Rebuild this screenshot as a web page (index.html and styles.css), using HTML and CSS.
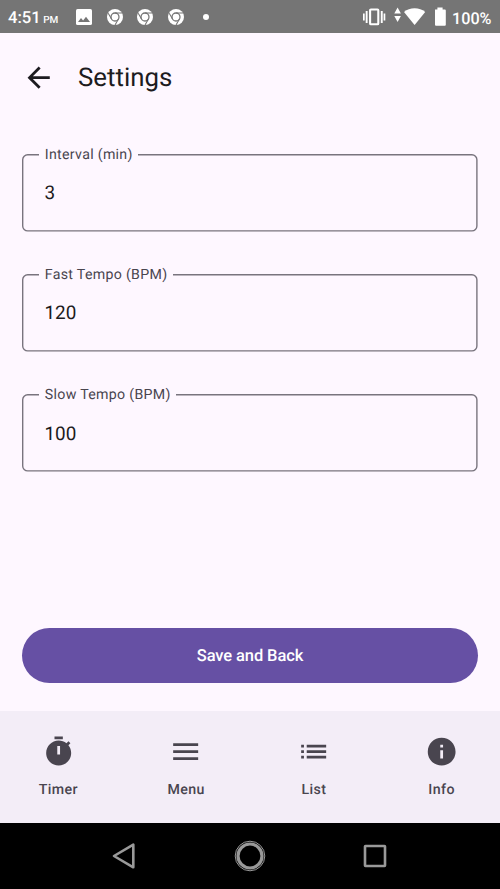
FILE: index.html
```html
<!DOCTYPE html>
<html lang="en">
<head>
<meta charset="utf-8">
<title>Settings</title>
<link rel="stylesheet" href="styles.css">
</head>
<body>
<svg class="defs" aria-hidden="true">
  <symbol id="chrome" viewBox="0 0 24 24">
    <circle cx="12" cy="12" r="12" fill="#fff"/>
    <circle cx="12" cy="12" r="6" fill="none" stroke="#757575" stroke-width="1.9"/>
    <path d="M12 6H22.4M6.8 15L1.8 6.4M17.2 15L12 24" fill="none" stroke="#757575" stroke-width="1.6"/>
  </symbol>
</svg>
<div class="status">
  <span class="clock">4:51<small>PM</small></span>
  <svg class="photo" viewBox="0 0 16 16"><rect width="16" height="16" rx="1.6" fill="#fff"/><path d="M2 13l3-4 2.1 2.6L10 7.7l4 5.3z" fill="#757575"/></svg>
  <svg class="chrome"><use href="#chrome"/></svg>
  <svg class="chrome"><use href="#chrome"/></svg>
  <svg class="chrome"><use href="#chrome"/></svg>
  <i class="dot"></i>
  <svg class="signals" viewBox="0 0 84 24" fill="#fff">
    <path d="M0 8.5h1.7v7H0zM2.7 6h1.9v12H2.7zM17.8 6h1.9v12h-1.9zM20.6 8.5h1.7v7h-1.7z"/>
    <rect x="7.1" y="4.5" width="8.2" height="14.8" rx=".8" fill="none" stroke="#fff" stroke-width="2.1"/>
    <path d="M34.6 2.5l3.3 6h-6.6zM34.6 16.9l3.3-6h-6.6z"/>
    <path d="M51.6 20L41 6.9Q45.5 3.2 51.6 3.2T62.2 6.9z"/>
    <path d="M72 4.6h2.4V2.6h5.2v2h2.3q.9 0 .9.9v14.3q0 .9-.9.9H73q-1 0-1-.9z"/>
  </svg>
  <span class="percent">100%</span>
</div>
<header class="topbar">
  <svg class="icon" viewBox="0 0 24 24"><path d="M20 11H7.83l5.59-5.59L12 4l-8 8 8 8 1.41-1.41L7.83 13H20v-2z"/></svg>
  <h1>Settings</h1>
</header>
<main>
  <div class="field">
    <svg class="outline"><rect x=".7" y=".7" width="454.2" height="76.2" rx="5"/></svg>
    <label>Interval (min)</label><span class="value">3</span>
  </div>
  <div class="field">
    <svg class="outline"><rect x=".7" y=".7" width="454.2" height="76.2" rx="5"/></svg>
    <label>Fast Tempo (BPM)</label><span class="value">120</span>
  </div>
  <div class="field">
    <svg class="outline"><rect x=".7" y=".7" width="454.2" height="76.2" rx="5"/></svg>
    <label>Slow Tempo (BPM)</label><span class="value">100</span>
  </div>
  <button class="save">Save and Back</button>
</main>
<nav class="tabs">
  <div class="tab"><svg class="icon" viewBox="0 0 24 24"><path d="M9 1h6v2H9zM19.03 7.39l1.42-1.42c-.43-.51-.9-.99-1.41-1.41l-1.42 1.42C16.07 4.74 14.12 4 12 4c-4.97 0-9 4.03-9 9s4.02 9 9 9 9-4.03 9-9c0-2.12-.74-4.07-1.97-5.61zM13 14h-2V8h2v6z"/></svg><span>Timer</span></div>
  <div class="tab"><svg class="icon" viewBox="0 0 24 24"><path d="M3 18h18v-2H3v2zm0-5h18v-2H3v2zm0-7v2h18V6H3z"/></svg><span>Menu</span></div>
  <div class="tab"><svg class="icon" viewBox="0 0 24 24"><path d="M3 13h2v-2H3v2zm0 4h2v-2H3v2zm0-8h2V7H3v2zm4 4h14v-2H7v2zm0 4h14v-2H7v2zM7 7v2h14V7H7z"/></svg><span>List</span></div>
  <div class="tab"><svg class="icon" viewBox="0 0 24 24"><path d="M12 2C6.48 2 2 6.48 2 12s4.48 10 10 10 10-4.48 10-10S17.52 2 12 2zm1 15h-2v-6h2v6zm0-8h-2V7h2v2z"/></svg><span>Info</span></div>
</nav>
<footer class="system">
  <svg viewBox="0 0 32 32"><path d="M5 16L24.3 4.7v22.6z"/></svg>
  <svg viewBox="0 0 32 32"><circle cx="16" cy="16" r="14.8" stroke-width="1"/><circle cx="16" cy="16" r="12" stroke-width="3.2"/></svg>
  <svg viewBox="0 0 32 32"><rect x="6" y="6" width="20" height="20" rx=".5"/></svg>
</footer>
</body>
</html>
```

FILE: styles.css
```css
* { box-sizing: border-box; }
body {
  margin: 0;
  height: 889px;
  display: flex;
  flex-direction: column;
  overflow: hidden;
  background: #fef7ff;
  color: #1d1b20;
  font-family: Roboto, sans-serif;
  text-rendering: geometricPrecision;
}
svg { display: block; flex: none; overflow: visible; }
.defs { position: absolute; width: 0; height: 0; overflow: hidden; }
.status {
  flex: none;
  height: 33px;
  padding: 0 8px;
  display: flex;
  align-items: center;
  background: #757575;
  color: #fff;
  font-size: 16.6px;
  font-weight: 500;
}
.clock { width: 68px; white-space: nowrap; padding-top: 3px; }
.clock small { font-size: 10px; margin-left: 2.5px; }
.photo { width: 16px; height: 16px; margin-right: 14.5px; }
.chrome { width: 16px; height: 16px; margin-right: 14.5px; }
.dot { width: 6px; height: 6px; margin-left: 4.5px; border-radius: 50%; background: #fff; }
.signals { width: 84px; height: 24px; margin-left: auto; margin-top: 1px; }
.percent { width: 40px; margin-left: 5px; padding-top: 3px; font-size: 16.2px; white-space: nowrap; }
.topbar {
  flex: none;
  height: 89px;
  padding: 0 22.3px;
  display: flex;
  align-items: center;
  gap: 22.4px;
}
.icon { width: 33.33px; height: 33.33px; fill: currentColor; }
h1 { margin: 0; padding-top: 2px; font-size: 25.8px; font-weight: 400; line-height: 33px; }
main {
  flex: 1;
  display: flex;
  flex-direction: column;
  gap: 42.6px;
  padding: 31.5px 22.2px 27.7px;
}
.field { position: relative; height: 77.8px; padding: 0 22.2px; display: flex; align-items: center; }
.outline { position: absolute; left: 0; top: 0; width: 455.6px; height: 77.8px; fill: none; stroke: #79747e; stroke-width: 1.39; }
.field label {
  position: absolute;
  left: 17px;
  top: -7px;
  padding: 0 5.6px;
  background: #fef7ff;
  color: #49454f;
  font-size: 14.2px;
  line-height: 17px;
  letter-spacing: .3px;
}
.value { font-size: 18.9px; letter-spacing: .1px; }
.save {
  margin-top: auto;
  height: 55.5px;
  padding: 2px 0 0;
  border: 0;
  border-radius: 28px;
  background: #6650a4;
  color: #fff;
  font: 500 16.5px Roboto, sans-serif;
  letter-spacing: -.1px;
  text-rendering: inherit;
}
.tabs {
  flex: none;
  height: 111.5px;
  display: grid;
  grid-template-columns: repeat(4, 1fr);
  gap: 11.1px;
  background: #f3edf7;
  color: #49454f;
}
.tab {
  padding-top: 24.3px;
  display: flex;
  flex-direction: column;
  align-items: center;
  gap: 13px;
  font-size: 14.2px;
  font-weight: 500;
  letter-spacing: .4px;
  line-height: 17px;
}
.system {
  flex: none;
  height: 66.5px;
  padding: 0 62.5px;
  display: flex;
  align-items: center;
  justify-content: space-around;
  background: #000;
}
.system svg { width: 32px; height: 32px; fill: none; stroke: #999; stroke-width: 2.6; stroke-linejoin: round; }
```
